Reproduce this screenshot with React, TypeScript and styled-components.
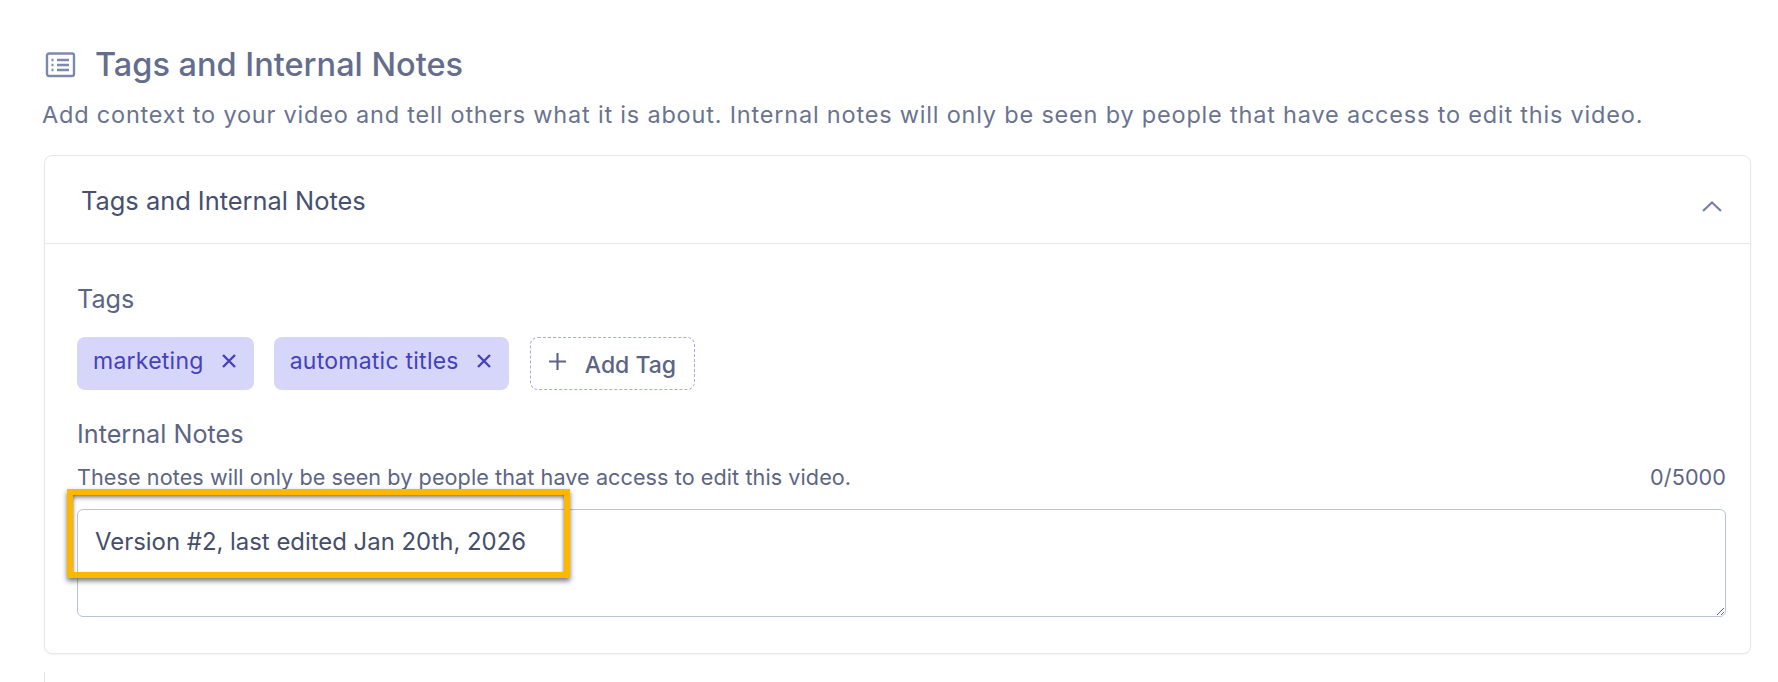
import React from "react";
import styled, { createGlobalStyle } from "styled-components";

const Global = createGlobalStyle`
  html, body { margin: 0; padding: 0; background: #fff; }
  body { font-family: "Inter", "Open Sans", sans-serif; overflow: hidden; }
`;
const Page = styled.div`
  width: 1778px; height: 682px; box-sizing: border-box; padding: 46px 27px 0 42px; overflow: hidden;
`;
const Heading = styled.div`
  display: flex; align-items: center; gap: 18px; height: 38px; padding-left: 3px;
`;
const HeadingIcon = styled.svg`
  width: 32px; height: 28px; flex: none; color: #7f89ad;
`;
const HeadingText = styled.h2`
  margin: 0; font-size: 32.5px; line-height: 38px; font-weight: 500; color: #646d8e;
`;
const Lead = styled.p`
  margin: 18px 0 0; font-size: 23.5px; line-height: 26px; font-weight: 400; color: #6a7390; letter-spacing: 0.8px; white-space: nowrap;
`;
const Card = styled.section`
  margin: 27px 0 0 2px; height: 499px; box-sizing: border-box; border: 1px solid #e6e7ea; border-radius: 8px;
  box-shadow: 0 1px 2px rgba(0,0,0,.05); background: #fff;
`;
const CardHeader = styled.header`
  height: 88px; box-sizing: border-box; border-bottom: 1px solid #e6e7ea; display: flex; align-items: center; justify-content: space-between;
  padding: 0 27px 0 36px;
`;
const CardTitle = styled.h3`
  margin: 2px 0 0; font-size: 25.4px; font-weight: 400; color: #46506e;
`;
const Chevron = styled.svg`
  width: 22px; height: 12px; margin-top: 12px; color: #7880a8;
`;
const CardBody = styled.div`
  padding: 0 24px 0 32px;
`;
const FieldLabel = styled.div`
  font-size: 25.2px; line-height: 30px; font-weight: 400; color: #5c6584;
`;
const TagsLabel = styled(FieldLabel)`
  margin-top: 40px;
`;
const NotesLabel = styled(FieldLabel)`
  margin-top: 29px;
`;
const TagRow = styled.div`
  display: flex; align-items: stretch; gap: 20px; margin-top: 23px; height: 53px;
`;
const Tag = styled.div`
  display: flex; align-items: center; gap: 17px; box-sizing: border-box; padding: 0 17px 5px 16px; background: #d6d6fb; border-radius: 8px;
  color: #4541bd; font-size: 23px; font-weight: 400; letter-spacing: 0.25px;
`;
const TagClose = styled.svg`
  width: 16px; height: 16px;
`;
const AddTag = styled.button`
  display: flex; align-items: center; gap: 18px; box-sizing: border-box; margin-left: 1px; padding: 2px 18px 0 17px; background: #fff; border: 1px dashed #a9a7ee; border-radius: 8px;
  color: #5c6482; font-family: inherit; font-size: 23px; font-weight: 500;
`;
const PlusIcon = styled.svg`
  width: 19px; height: 19px; margin-top: -7px; color: #5c6482;
`;
const HintRow = styled.div`
  display: flex; justify-content: space-between; margin-top: 15px; font-size: 21.6px; line-height: 26px; font-weight: 400; color: #5c6584; letter-spacing: 0.08px;
`;
const NotesWrap = styled.div`
  position: relative; margin-top: 19px; height: 108px;
`;
const Notes = styled.textarea`
  display: block; width: 100%; height: 108px; box-sizing: border-box; border: 1px solid #bcc1de; border-radius: 6px; padding: 17px 17px;
  font-family: inherit; font-size: 23.9px; line-height: 30px; font-weight: 400; color: #454e6b; outline: none; resize: vertical; background: #fff;
`;
const Highlight = styled.div`
  position: absolute; left: -10px; top: -20px; width: 503px; height: 89px; box-sizing: border-box; border: 6px solid #fdb700;
  box-shadow: 0 3px 5px rgba(30,30,30,.6), inset 0 3px 5px -1px rgba(30,30,30,.65), inset 2px 0 3px -2px rgba(30,30,30,.3), inset -2px 0 3px -2px rgba(30,30,30,.3);
  pointer-events: none;
`;
const NextCardEdge = styled.div`
  margin: 18px 0 0 2px; height: 10px; width: 0; border-left: 1px solid #e6e7ea;
`;

export default function App() {
  return (
    <Page>
      <Global />
      <Heading>
        <HeadingIcon viewBox="0 0 32 28" fill="none" stroke="currentColor" strokeWidth="2.4">
          <rect x="2" y="2.5" width="27" height="22.5" rx="2" />
          <path d="M12 9h12M12 14h12M12 19h12M6.5 9h2M6.5 14h2M6.5 19h2" />
        </HeadingIcon>
        <HeadingText>Tags and Internal Notes</HeadingText>
      </Heading>
      <Lead>Add context to your video and tell others what it is about. Internal notes will only be seen by people that have access to edit this video.</Lead>
      <Card>
        <CardHeader>
          <CardTitle>Tags and Internal Notes</CardTitle>
          <Chevron viewBox="0 0 22 12" fill="none" stroke="currentColor" strokeWidth="2.2"><path d="M2 11l9-8.5 9 8.5" /></Chevron>
        </CardHeader>
        <CardBody>
          <TagsLabel>Tags</TagsLabel>
          <TagRow>
            <Tag>marketing<TagClose viewBox="0 0 16 16" stroke="currentColor" strokeWidth="2.4"><path d="M2 2l12 12M14 2L2 14" /></TagClose></Tag>
            <Tag>automatic titles<TagClose viewBox="0 0 16 16" stroke="currentColor" strokeWidth="2.4"><path d="M2 2l12 12M14 2L2 14" /></TagClose></Tag>
            <AddTag><PlusIcon viewBox="0 0 18 18" stroke="currentColor" strokeWidth="2"><path d="M9 1v16M1 9h16" /></PlusIcon>Add Tag</AddTag>
          </TagRow>
          <NotesLabel>Internal Notes</NotesLabel>
          <HintRow><span>These notes will only be seen by people that have access to edit this video.</span><span>0/5000</span></HintRow>
          <NotesWrap>
            <Notes defaultValue="Version #2, last edited Jan 20th, 2026" />
            <Highlight />
          </NotesWrap>
        </CardBody>
      </Card>
      <NextCardEdge />
    </Page>
  );
}
